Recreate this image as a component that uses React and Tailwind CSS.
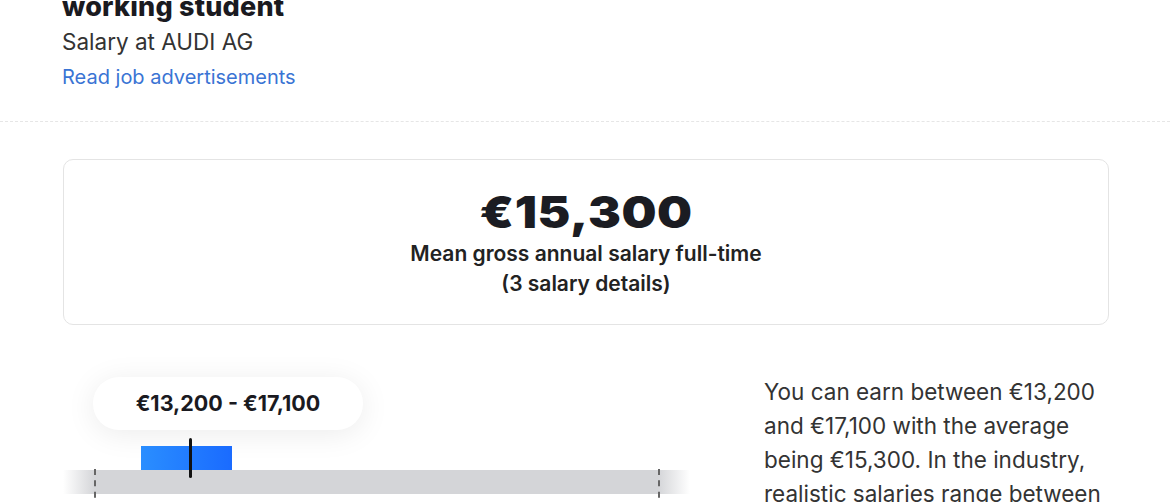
export default function App() {
  return (
    <div className="w-[1170px] h-[502px] overflow-hidden bg-white" style={{ fontFamily: "Inter, 'Noto Sans', sans-serif" }}>
      <div className="px-[62px] -mt-[9px]">
        <h1 className="text-[27px] leading-[32px] font-extrabold text-[#1a1a1f] tracking-[0.2px]">working student</h1>
        <p className="mt-[6px] text-[22.5px] leading-[26px] text-[#333]">Salary at AUDI AG</p>
        <a className="block mt-[10px] text-[20px] leading-[24px] text-[#3a74d4]">Read job advertisements</a>
      </div>
      <div className="mt-[32px] border-t border-dashed border-[#e6e6e6]" />
      <div className="pl-[63px] pr-[61px] pt-[37px]">
        <div className="h-[166px] rounded-[10px] border border-[#e4e4e4] flex flex-col items-center pt-[27px]">
          <div className="text-[44px] leading-[50px] font-black text-[#1b1c22] scale-x-[1.12] tracking-[0.5px]">€15,300</div>
          <div className="mt-[2px] text-[21px] leading-[30px] font-semibold text-[#222]">Mean gross annual salary full-time</div>
          <div className="text-[21px] leading-[30px] font-semibold text-[#222]">(3 salary details)</div>
        </div>
        <div className="mt-[36px] flex">
          <div className="w-[627px] shrink-0 flex flex-col items-start pt-[16px]">
            <div className="ml-[30px] w-[270px] h-[53px] rounded-[26px] bg-white shadow-[0_4px_30px_rgba(0,0,0,0.08)] flex items-center justify-center">
              <span className="text-[21.5px] font-bold text-[#1a1a1f]">€13,200 - €17,100</span>
            </div>
            <div className="mt-[16px] ml-[78px] w-[91px] h-[24px] relative bg-[linear-gradient(to_right,#2a8eff,#1a6bff)]">
              <div className="absolute left-[48px] -top-[8px] w-[3px] h-[40px] bg-[#111] rounded-full z-10" />
            </div>
            <div className="relative w-full h-[24px] bg-[linear-gradient(to_right,#ffffff_0px,#d4d5d8_32px,#d4d5d8_calc(100%-32px),#ffffff_100%)]">
              <div className="absolute left-[31px] -top-[1px] h-[40px] border-l-2 border-dashed border-[#666]" />
              <div className="absolute left-[595px] -top-[1px] h-[40px] border-l-2 border-dashed border-[#666]" />
            </div>
          </div>
          <div className="ml-[74px] w-[350px] text-[22.5px] leading-[34px] text-[#333] pt-[14px]">
            You can earn between €13,200 and €17,100 with the average being €15,300. In the industry, realistic salaries range between
          </div>
        </div>
      </div>
    </div>
  );
}
